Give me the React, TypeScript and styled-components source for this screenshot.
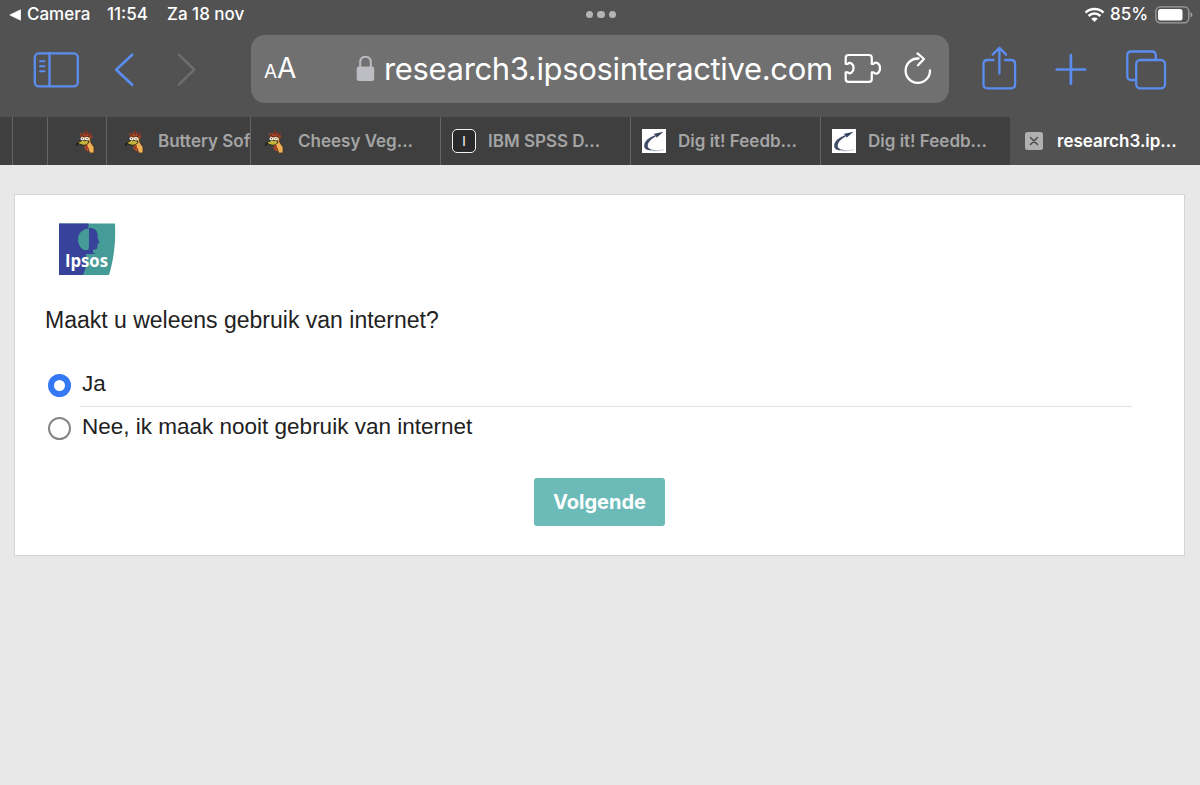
import React from 'react';
import styled, { createGlobalStyle } from 'styled-components';

const GlobalStyle = createGlobalStyle`
  * { box-sizing: border-box; }
  body {
    margin: 0;
    background: #e8e8e8;
    font-family: Inter, "Liberation Sans", sans-serif;
  }
  svg { display: block; flex: none; }
`;

const Screen = styled.div`
  height: 785px;
  overflow: hidden;
  background: #e8e8e8;
`;

const BrowserChrome = styled.header`
  background: #525252;
`;

const StatusBar = styled.div`
  display: flex;
  align-items: center;
  justify-content: space-between;
  height: 29px;
  padding: 0 7px 0 9px;
  color: #fff;
  font-size: 17px;
  line-height: 29px;
  font-weight: 500;
`;

const StatusGroup = styled.div<{ $align?: string }>`
  display: flex;
  flex: 1;
  align-items: center;
  justify-content: ${(p) => p.$align ?? 'flex-start'};
`;

const StatusText = styled.span<{ $width: number; $gap?: number; $spacing?: string }>`
  width: ${(p) => p.$width}px;
  margin-left: ${(p) => p.$gap ?? 0}px;
  letter-spacing: ${(p) => p.$spacing ?? '0'};
  white-space: nowrap;
`;

const Dots = styled.div`
  display: flex;
  gap: 4px;
  span {
    width: 7.6px;
    height: 7.6px;
    border-radius: 50%;
    background: #b4b4b4;
  }
`;

const Toolbar = styled.div`
  display: flex;
  height: 88px;
  padding: 6px 32px 0;
`;

const ToolButton = styled.button<{ $width: number; $gap?: number; $color?: string }>`
  flex: none;
  width: ${(p) => p.$width}px;
  height: 68px;
  margin-left: ${(p) => p.$gap ?? 0}px;
  padding: 0;
  border: 0;
  background: none;
  color: ${(p) => p.$color ?? '#5b8df0'};
`;

const AddressBar = styled.div`
  display: flex;
  flex: none;
  align-items: center;
  width: 698px;
  height: 68px;
  margin-left: 52px;
  padding-left: 13px;
  border-radius: 14px;
  background: #707070;
  color: #fff;
`;

const TextSize = styled.div`
  display: flex;
  align-items: baseline;
  width: 92px;
  line-height: 40px;
  padding-top: 2px;
`;

const Letter = styled.span<{ $size: number }>`
  font-size: ${(p) => p.$size}px;
`;

const Url = styled.span`
  width: 460px;
  margin-left: 9px;
  font-size: 31px;
  line-height: 68px;
  letter-spacing: -0.35px;
  white-space: nowrap;
`;

const TabStrip = styled.nav`
  display: flex;
  height: 48px;
`;

const Tab = styled.div<{ $width: number; $pad?: number; $active?: boolean }>`
  display: flex;
  flex: none;
  align-items: center;
  width: ${(p) => p.$width}px;
  padding-left: ${(p) => p.$pad ?? 11}px;
  overflow: hidden;
  border-right: ${(p) => (p.$active ? '0' : '1px solid #656565')};
  background: ${(p) => (p.$active ? '#525252' : '#3f3f3f')};
  color: ${(p) => (p.$active ? '#fff' : '#a4a4a4')};
  &:nth-last-child(2) { border-right-color: #3f3f3f; }
`;

const TabTitle = styled.span<{ $gap?: number }>`
  margin-left: ${(p) => p.$gap ?? 12}px;
  font-size: 17px;
  font-weight: 600;
  line-height: 48px;
  white-space: nowrap;
`;

const Page = styled.main`
  padding: 29px 15px 0 14px;
  font-family: "Liberation Sans", Arial, sans-serif;
  color: #222;
`;

const Card = styled.section`
  height: 362px;
  padding: 28px 30px 0;
  border: 1px solid #d4d4d4;
  background: #fff;
`;

const LogoRow = styled.div`
  height: 84px;
  padding-left: 14px;
`;

const Question = styled.h1`
  margin: 0;
  font-size: 23px;
  font-weight: 400;
  line-height: 26px;
  letter-spacing: 0;
  white-space: nowrap;
`;

const Options = styled.div`
  margin-top: 31px;
`;

const Option = styled.label<{ $divided?: boolean }>`
  display: flex;
  align-items: center;
  height: 43px;
  padding-left: 3px;
  font-size: 22.5px;
`;

const Radio = styled.span<{ $checked?: boolean }>`
  flex: none;
  width: 23px;
  height: 23px;
  border: ${(p) => (p.$checked ? '6.5px solid #3478f6' : '2px solid #868686')};
  border-radius: 50%;
`;

const OptionLabel = styled.span<{ $divided?: boolean }>`
  width: 1052px;
  height: 43px;
  margin-left: 9px;
  padding-left: 2px;
  border-bottom: 1px solid ${(p) => (p.$divided ? '#e4e4e4' : 'transparent')};
  line-height: 39px;
`;

const Actions = styled.div`
  display: flex;
  justify-content: center;
  margin-top: 28px;
`;

const NextButton = styled.button`
  width: 131px;
  height: 48px;
  padding: 0;
  border: 0;
  border-radius: 3px;
  background: #6cbbb9;
  color: #fff;
  font: 700 20px/48px Inter, sans-serif;
`;

const Rooster = () => (
  <svg width="20" height="24" viewBox="0 0 20 24">
    <path d="M5 8 4 4l4 1 2-5 2 5 4-2-1 4 2 1-3 2H6z" fill="#a8422a" />
    <path d="M10 1v5M5 5l3 3M15 4l-3 4" stroke="#3a1c14" strokeWidth=".8" fill="none" />
    <path d="M7 8h7l1 6 3 4v6h-4.5l-1-4-3-4z" fill="#f0b255" stroke="#4a3220" strokeWidth=".8" />
    <path d="m11 16 1 6M10 16l-1 3 3 3" stroke="#b94a28" strokeWidth="1.4" fill="none" />
    <path d="m1 14 6-3 6 1c0 3-4 5-7 4z" fill="#c4b33c" stroke="#292317" strokeWidth="1" />
    <path d="M1 14v3" stroke="#171717" strokeWidth="1.4" />
    <ellipse cx="6.5" cy="9.7" rx="2" ry="1.7" fill="#f4f0e4" />
    <ellipse cx="10.8" cy="9.7" rx="2" ry="1.7" fill="#f4f0e4" />
    <path d="M6 9.7h1M10.5 9.7h1" stroke="#222" />
  </svg>
);

const SwooshIcon = () => (
  <svg width="24" height="24" viewBox="0 0 24 24">
    <path d="M0 0h24v24H0z" fill="#fff" />
    <path d="M19 4.7C10 6 2 11 2.2 17c.2 4.8 7 5.2 18 4.2-8 .3-14.4-.2-14.5-4.2C5.6 12.5 11 8 19 4.7z" fill="#3d4965" />
    <path d="m11.5 5 10-2.2-7 6-.5-2.3z" fill="#34415f" />
    <path d="M8 21.5c5 .7 10 .3 14-1" stroke="#c9ced8" fill="none" />
  </svg>
);

const LetterIcon = styled.span`
  display: flex;
  flex: none;
  align-items: center;
  justify-content: center;
  width: 24px;
  height: 24px;
  border: 1.5px solid #f2f2f2;
  border-radius: 5px;
  background: #2a2a2c;
  color: #fff;
  font-size: 13px;
  line-height: 20px;
`;

const CloseIcon = () => (
  <svg width="18" height="18" viewBox="0 0 18 18">
    <rect width="18" height="18" rx="2.5" fill="#b0b0b0" />
    <path d="m5.5 5.5 7 7m0-7-7 7" stroke="#4b4b4b" strokeWidth="1.5" strokeLinecap="round" />
  </svg>
);

const IpsosLogo = () => (
  <svg width="57" height="53" viewBox="0 0 57 53">
    <path d="M0 .5h56c.8 18-.9 35-6 51.500H0z" fill="#459b98" />
    <path d="M0 .5h29.500v5c-6 1-10 5.500-10 11.500 0 5.500 3 9.500 7.500 10.500v4L27 44l-3 8H0z" fill="#37439a" />
    <path d="M30 5c5-.5 8.500 2 8.600 6.500l.1 3.500 1.800 5-1.900.8-.2 4c-.2 1.600-1.900 2-4.400 1.800v3l2.500 1.400H20l6.500-2v-3L30 24z" fill="#37439a" />
    <path d="M30 6c-7 0-11 4.500-11 10.500 0 5 3 9 7 10.500h3.500z" fill="#459b98" />
    <text x="6" y="44" fill="#fff" fontFamily="Open Sans, sans-serif" fontWeight="700" fontSize="18" textLength="43" lengthAdjust="spacingAndGlyphs">Ipsos</text>
  </svg>
);

const stroke = {
  fill: 'none',
  stroke: 'currentColor',
  strokeWidth: 2.3,
  strokeLinecap: 'round' as const,
  strokeLinejoin: 'round' as const,
};

export default function App() {
  return (
    <Screen>
      <GlobalStyle />
      <BrowserChrome>
        <StatusBar>
          <StatusGroup>
            <svg width="12" height="12" viewBox="0 0 12 12"><path d="M.8 6 11.500.8v10.400z" fill="#fff" stroke="#fff" strokeWidth=".7" strokeLinejoin="round" /></svg>
            <StatusText $width={64} $gap={6}>Camera</StatusText>
            <StatusText $width={44} $gap={16}>11:54</StatusText>
            <StatusText $width={80} $gap={16}>Za 18 nov</StatusText>
          </StatusGroup>
          <Dots><span /><span /><span /></Dots>
          <StatusGroup $align="flex-end">
            <svg width="21" height="16" viewBox="0 0 21 16">
              <path d="M1.500 5.600a13 13 0 0 1 18 0M4.600 9a8.500 8.500 0 0 1 11.800 0" fill="none" stroke="#fff" strokeWidth="2.500" />
              <path d="M10.500 15 7.300 11.700a4.600 4.600 0 0 1 6.400 0z" fill="#fff" />
            </svg>
            <StatusText $width={39} $gap={5}>85%</StatusText>
            <svg style={{ marginLeft: 6 }} width="38" height="18" viewBox="0 0 38 18">
              <rect x=".8" y=".8" width="33" height="16" rx="4.500" fill="none" stroke="#a0a0a0" strokeWidth="1.300" />
              <rect x="3" y="3" width="24.500" height="11.600" rx="2.500" fill="#fff" />
              <path d="M35.500 6v5.500q2-1 2-2.750T35.500 6" fill="#a0a0a0" />
            </svg>
          </StatusGroup>
        </StatusBar>

        <Toolbar>
          <ToolButton $width={48} aria-label="Sidebar">
            <svg width="48" height="68" viewBox="32 35 48 68" {...stroke}>
              <rect x="34.800" y="53.300" width="43" height="33" rx="4" />
              <path d="M49.500 53.500v32.500" />
              <path d="M40 61.200h4.500M40 66.300h4.500M40 71.200h4.500" strokeWidth="1.900" />
            </svg>
          </ToolButton>
          <ToolButton $width={26} $gap={32} aria-label="Back">
            <svg width="26" height="68" viewBox="112 35 26 68" {...stroke} strokeWidth="2.700"><path d="m132.200 54.700-16 15 16 15" /></svg>
          </ToolButton>
          <ToolButton $width={26} $gap={37} $color="#6e6e6e" aria-label="Forward">
            <svg width="26" height="68" viewBox="175 35 26 68" {...stroke} strokeWidth="2.500"><path d="m178.800 54.700 15.500 15-15.500 15" /></svg>
          </ToolButton>

          <AddressBar style={{ marginLeft: 50 }}>
            <TextSize><Letter $size={19}>A</Letter><Letter $size={28}>A</Letter></TextSize>
            <svg width="19" height="68" viewBox="356 35 19 68">
              <path d="M360.200 69v-6.500q0-5.700 5.300-5.700t5.300 5.700V69" fill="none" stroke="#b9bbc0" strokeWidth="2" />
              <rect x="356.700" y="66.500" width="17.500" height="14.500" rx="2.300" fill="#bcbdc3" />
            </svg>
            <Url>research3.ipsosinteractive.com</Url>
            <svg width="90" height="68" viewBox="845 35 90 68" {...stroke} stroke="#fff" strokeWidth="2.200">
              <path d="M849.500 55h20.500q2.800 0 2.800 2.800V64h1.500c1.300-1.500 3-1.700 4.300-.8 3.200 1.800 3.200 8 0 10-1.300.8-3 .5-4.300-.9h-1.500V79q0 2.800-2.800 2.800h-20.500q-2.800 0-2.800-2.800v-6.700h2c1 1.100 2.500 1.300 3.800.4 2.800-2 2.800-7.300 0-9.200-1.300-.8-2.800-.6-3.800.5h-2v-6.200q0-2.800 2.800-2.800z" />
              <path d="M919.500 58.500a12.200 12.200 0 1 0 11.500 12M918.500 53.400l6.500 5.600-6 6.200" strokeWidth="2.300" />
            </svg>
          </AddressBar>

          <ToolButton $width={40} $gap={31} aria-label="Share">
            <svg width="40" height="68" viewBox="980 35 40 68" {...stroke}>
              <path d="M993.500 60h-6q-4 0-4 4v20.300q0 4 4 4h23.600q4 0 4-4V64q0-4-4-4h-6" />
              <path d="M999.400 73.500V48.200M992.700 54.600l6.700-6.700 6.700 6.700" />
            </svg>
          </ToolButton>
          <ToolButton $width={34} $gap={33} aria-label="New tab">
            <svg width="34" height="68" viewBox="1053 35 34 68" {...stroke} strokeWidth="2.700"><path d="M1056.700 69.500h28.500M1070.900 55.200v28.500" /></svg>
          </ToolButton>
          <ToolButton $width={44} $gap={37} aria-label="Tab overview">
            <svg width="44" height="68" viewBox="1124 35 44 68" {...stroke}>
              <path d="M1155.800 60v-4.500q0-4-4-4h-20.500q-4 0-4 4v20.500q0 4 4 4h4.700" />
              <rect x="1136.200" y="60" width="28.800" height="28.300" rx="4" />
            </svg>
          </ToolButton>
        </Toolbar>

        <TabStrip>
          <Tab $width={13} />
          <Tab $width={35} />
          <Tab $width={59} $pad={28}><Rooster /></Tab>
          <Tab $width={144} $pad={18}><Rooster /><TabTitle $gap={13}>Buttery Soft</TabTitle></Tab>
          <Tab $width={190} $pad={14}><Rooster /><TabTitle $gap={13}>Cheesy Veg...</TabTitle></Tab>
          <Tab $width={190}><LetterIcon>I</LetterIcon><TabTitle>IBM SPSS D...</TabTitle></Tab>
          <Tab $width={190}><SwooshIcon /><TabTitle>Dig it! Feedb...</TabTitle></Tab>
          <Tab $width={189}><SwooshIcon /><TabTitle>Dig it! Feedb...</TabTitle></Tab>
          <Tab $width={190} $pad={15} $active><CloseIcon /><TabTitle $gap={14}>research3.ip...</TabTitle></Tab>
        </TabStrip>
      </BrowserChrome>

      <Page>
        <Card>
          <LogoRow><IpsosLogo /></LogoRow>
          <Question>Maakt u weleens gebruik van internet?</Question>
          <Options>
            <Option><Radio $checked /><OptionLabel $divided>Ja</OptionLabel></Option>
            <Option><Radio /><OptionLabel>Nee, ik maak nooit gebruik van internet</OptionLabel></Option>
          </Options>
          <Actions><NextButton>Volgende</NextButton></Actions>
        </Card>
      </Page>
    </Screen>
  );
}
